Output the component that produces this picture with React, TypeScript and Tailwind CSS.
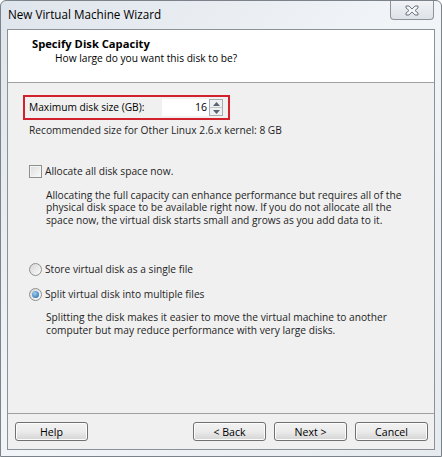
import { useState } from "react";

function WinButton({ label }: { label: string }) {
  return (
    <button
      type="button"
      className="flex h-[19px] w-[73px] items-center justify-center rounded-[3px] border border-[#707070] bg-gradient-to-b from-[#f2f2f2] via-[#ebebeb] to-[#d4d4d4] text-[10.6px] leading-[12px] text-black shadow-[inset_0_0_0_1px_#fcfcfc]"
    >
      {label}
    </button>
  );
}

function Radio({ checked }: { checked: boolean }) {
  return (
    <span className="flex h-[13px] w-[13px] shrink-0 items-center justify-center rounded-full border border-[#8e8f8f] bg-gradient-to-br from-[#d6d6d6] to-[#fbfbfb]">
      {checked ? (
        <span className="h-[7px] w-[7px] rounded-full bg-[radial-gradient(circle_at_40%_35%,#9fd0f5,#1b5f9e)]" />
      ) : null}
    </span>
  );
}

export default function App() {
  const [size] = useState(16);

  return (
    <div className="h-[457px] w-[442px] overflow-hidden bg-white font-['Open_Sans',sans-serif] text-[10.2px] leading-[12.5px] text-[#1e1e1e]">
      <div className="flex h-full w-full flex-col rounded-t-[6px] border border-[#7c8289] bg-gradient-to-br from-[#dfe5ec] via-[#f2f5f8] to-[#e6ebf0] px-[6px] pb-[6px]">
        <div className="flex h-[28px] shrink-0 items-start justify-between">
          <span className="mt-[5px] pl-[1px] text-[11.7px] leading-[16px] text-black">New Virtual Machine Wizard</span>
          <div className="mr-[1px] flex h-[19px] w-[44px] items-center justify-center rounded-b-[4px] border border-t-0 border-[#8d939a] bg-gradient-to-b from-[#f1f3f6] to-[#dde2e8]">
            <svg width="14" height="11" viewBox="0 0 14 11">
              <path d="M1 1h3l3 3 3-3h3v2l-3 2.5 3 2.5v2h-3l-3-3-3 3H1V8l3-2.5L1 3z" fill="#f4f5f7" stroke="#6c7580" strokeWidth="1" />
            </svg>
          </div>
        </div>
        <div className="flex flex-1 flex-col border border-[#8c9097]">
          <div className="h-[53px] shrink-0 border-b border-[#a0a0a0] bg-white pl-[24px] pt-[7px]">
            <div className="text-[11.2px] font-bold leading-[13px] text-black">Specify Disk Capacity</div>
            <div className="mt-[2px] pl-[23px] text-black">How large do you want this disk to be?</div>
          </div>
          <div className="flex flex-1 flex-col bg-[#f0f0f0] pl-[15px] pr-[10px]">
            <div className="mt-[12px] flex h-[25px] w-[207px] items-center border-2 border-[#d2212d] pl-[4px] pr-[5px]">
              <span className="whitespace-nowrap text-black">Maximum disk size (GB):</span>
              <div className="ml-auto flex h-[17px] items-center">
                <span className="flex h-[17px] w-[47px] items-center justify-end bg-white pr-[2px] text-[10.6px] text-black">{size}</span>
                <div className="flex h-[17px] w-[14px] flex-col border border-[#a8adb3] bg-[#eef0f2]">
                  <span className="flex flex-1 items-center justify-center border-b border-[#c3c7cc]">
                    <svg width="7" height="4" viewBox="0 0 7 4"><path d="M3.5 0L7 4H0z" fill="#5a6470" /></svg>
                  </span>
                  <span className="flex flex-1 items-center justify-center">
                    <svg width="7" height="4" viewBox="0 0 7 4"><path d="M0 0h7L3.5 4z" fill="#5a6470" /></svg>
                  </span>
                </div>
              </div>
            </div>
            <div className="mt-[4px] whitespace-nowrap pl-[6px]">Recommended size for Other Linux 2.6.x kernel: 8 GB</div>
            <div className="mt-[28px] flex h-[13px] items-center gap-[3px] pl-[6px]">
              <span className="h-[13px] w-[13px] shrink-0 border border-[#8e8f8f] bg-gradient-to-br from-[#dcdcdc] to-[#fafafa] shadow-[inset_0_0_0_1px_#f4f4f4]" />
              <span>Allocate all disk space now.</span>
            </div>
            <p className="mt-[11px] whitespace-nowrap pl-[23px]">
              Allocating the full capacity can enhance performance but requires all of the
              <br />
              physical disk space to be available right now. If you do not allocate all the
              <br />
              space now, the virtual disk starts small and grows as you add data to it.
            </p>
            <div className="mt-[37px] flex h-[13px] items-center gap-[3px] pl-[6px]">
              <Radio checked={false} />
              <span>Store virtual disk as a single file</span>
            </div>
            <div className="mt-[12px] flex h-[13px] items-center gap-[3px] pl-[6px]">
              <Radio checked />
              <span>Split virtual disk into multiple files</span>
            </div>
            <p className="mt-[10px] whitespace-nowrap pl-[23px]">
              Splitting the disk makes it easier to move the virtual machine to another
              <br />
              computer but may reduce performance with very large disks.
            </p>
            <div className="mt-auto -ml-[15px] -mr-[10px] flex h-[36px] items-start border-t border-[#a0a0a0] pl-[7px] pr-[6px] pt-[8px]">
              <WinButton label="Help" />
              <div className="ml-auto flex gap-[8px]">
                <WinButton label="< Back" />
                <WinButton label="Next >" />
                <WinButton label="Cancel" />
              </div>
            </div>
          </div>
        </div>
      </div>
    </div>
  );
}
